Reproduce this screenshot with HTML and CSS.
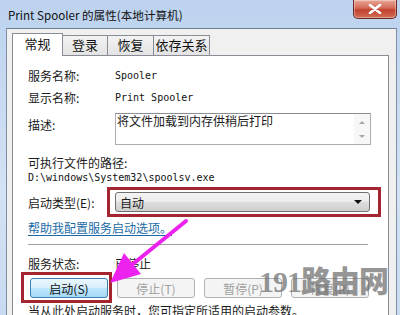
FILE: index.html
```html
<!DOCTYPE html>
<html lang="zh">
<head>
<meta charset="utf-8">
<link rel="stylesheet" href="styles.css">
</head>
<body>
<div class="window">
  <div class="titlebar">
    <span class="title">Print Spooler 的属性(本地计算机)</span>
    <span class="close">
      <svg width="14" height="10" viewBox="0 0 14 10"><path d="M2 1 L12 9 M12 1 L2 9" stroke="#fff" stroke-width="2.6" stroke-linecap="round"/></svg>
    </span>
  </div>
  <div class="client">
    <div class="tabs">
      <span class="tab active">常规</span>
      <span class="tab">登录</span>
      <span class="tab">恢复</span>
      <span class="tab">依存关系</span>
    </div>
    <div class="panel">
      <div class="row"><span class="label">服务名称:</span><span class="mono">Spooler</span></div>
      <div class="row"><span class="label">显示名称:</span><span class="mono">Print Spooler</span></div>
      <div class="row desc">
        <span class="label">描述:</span>
        <div class="textarea">
          <span class="tatext">将文件加载到内存供稍后打印</span>
          <span class="scroll"><i class="up"></i><i class="down"></i></span>
        </div>
      </div>
      <div class="plain pathlabel">可执行文件的路径:</div>
      <div class="mono path">D:\windows\System32\spoolsv.exe</div>
      <div class="row startrow">
        <span class="label">启动类型(E):</span>
        <div class="select hl-sel"><span>自动</span><i class="caret"></i></div>
      </div>
      <div class="link">帮助我配置服务启动选项。</div>
      <div class="sep"></div>
      <div class="row status"><span class="label">服务状态:</span><span>已停止</span></div>
      <div class="buttons">
        <span class="btn primary hl-btn">启动(S)</span>
        <span class="btn disabled">停止(T)</span>
        <span class="btn disabled">暂停(P)</span>
        <span class="btn disabled">恢复(R)</span>
      </div>
      <div class="plain note">当从此处启动服务时，您可指定所适用的启动参数。</div>
    </div>
  </div>
  <svg class="arrow" width="400" height="315" viewBox="0 0 400 315">
    <line x1="186" y1="221" x2="128" y2="268" stroke="#ee22ee" stroke-width="4" stroke-linecap="round"/>
    <polygon points="110,283 124,253 141,274" fill="#ee22ee"/>
  </svg>
  <div class="watermark"><span class="wm-num">191</span><span class="wm-cjk">路由网</span></div>
</div>
</body>
</html>
```
FILE: styles.css
```css
* { box-sizing: border-box; margin: 0; padding: 0; }
body {
  width: 400px;
  height: 315px;
  overflow: hidden;
  font-family: "Noto Sans CJK SC", "Noto Sans", sans-serif;
  font-size: 12px;
  color: #1a1a1a;
  background: #c8d9ef;
}
.window {
  position: relative;
  width: 400px;
  height: 315px;
  display: flex;
  flex-direction: column;
  background: linear-gradient(180deg, #bcd2ee 0%, #d3e2f4 60%, #c9dbf1 100%);
  overflow: hidden;
}
.titlebar {
  height: 28px;
  flex: none;
  display: flex;
  justify-content: space-between;
  align-items: flex-start;
  padding-left: 8px;
  padding-right: 3px;
}
.title {
  font-size: 11.6px;
  line-height: 14px;
  margin-top: 8px;
  color: #111;
}
.close {
  width: 44px;
  height: 19px;
  display: flex;
  align-items: center;
  justify-content: center;
  background: linear-gradient(180deg, #e9a898 0%, #d26a56 45%, #c2412b 55%, #d1705a 100%);
  border: 1px solid #6b2a24;
  border-top: none;
  border-radius: 0 0 5px 5px;
  box-shadow: inset 0 0 0 1px rgba(255,255,255,0.35);
}
.client {
  flex: 1;
  margin-left: 6px;
  margin-right: 3px;
  background: #f0f0f0;
  border-left: 1px solid #7f8fa3;
  border-top: 1px solid #6f7f95;
  border-right: 1px solid #7f8fa3;
  padding: 4px 7px 0 5px;
  display: flex;
  flex-direction: column;
}
.tabs {
  display: flex;
  align-items: flex-end;
  height: 22px;
  flex: none;
  position: relative;
  z-index: 2;
}
.tab {
  height: 20px;
  font-size: 13px;
  line-height: 18px;
  white-space: nowrap;
  text-align: center;
  border: 1px solid #898c95;
  border-left: none;
  border-bottom: none;
  background: linear-gradient(180deg, #f3f3f3, #e3e3e3);
  color: #111;
}
.tab:nth-child(2) { width: 45px; }
.tab:nth-child(3) { width: 46px; }
.tab:nth-child(4) { width: 56px; }
.tab.active {
  width: 51px;
  height: 23px;
  background: #fff;
  border-left: 1px solid #898c95;
  margin-bottom: -1px;
  line-height: 20px;
}
.panel {
  flex: 1;
  background: #fff;
  border: 1px solid #898c95;
  padding: 8px 16px 0 15px;
  display: flex;
  flex-direction: column;
}
.row {
  display: grid;
  grid-template-columns: 87px 1fr;
  align-items: center;
  height: 22px;
}
.label { color: #1a1a1a; }
.mono {
  font-family: "DejaVu Sans Mono", "Liberation Mono", monospace;
  font-size: 10px;
  color: #111;
}
.row.desc {
  height: 32px;
  margin-top: 5px;
  align-items: start;
}
.row.desc .label { padding-top: 3px; line-height: 18px; }
.textarea {
  height: 32px;
  border: 1px solid #abadb3;
  border-top-color: #8a8d94;
  display: flex;
  justify-content: space-between;
  margin-right: 1px;
}
.tatext { line-height: 14px; padding-left: 1px; }
.scroll {
  width: 16px;
  display: flex;
  flex-direction: column;
  justify-content: space-between;
  align-items: center;
  padding: 7px 0 6px;
  background: #f7f7f7;
}
.scroll i {
  width: 0; height: 0;
  border-left: 3px solid transparent;
  border-right: 3px solid transparent;
}
.scroll .up { border-bottom: 3px solid #a8a8a8; }
.scroll .down { border-top: 3px solid #a8a8a8; }
.plain { line-height: 18px; }
.pathlabel { margin-top: 9px; }
.path { line-height: 12px; }
.row.startrow { height: 20px; margin-top: 8px; }
.select {
  height: 20px;
  border: 1px solid #707070;
  border-radius: 3px;
  background: linear-gradient(180deg, #f4f4f4 0%, #ebebeb 48%, #dddddd 52%, #cfcfcf 100%);
  display: flex;
  justify-content: space-between;
  align-items: center;
  padding: 0 7px 0 4px;
  margin-right: 2px;
}
.caret {
  width: 0; height: 0;
  border-left: 4px solid transparent;
  border-right: 4px solid transparent;
  border-top: 4px solid #111;
}
.hl-sel, .hl-btn { position: relative; }
.hl-sel::after, .hl-btn::after {
  content: "";
  position: absolute;
  border: 3px solid #a42530;
  pointer-events: none;
}
.hl-sel::after { top: -6px; left: -9px; right: -12px; bottom: -6px; }
.hl-btn::after { top: -7px; left: -10px; right: -5px; bottom: -6px; }
.link {
  line-height: 18px;
  margin-top: 7px;
  color: #1b6aa5;
  text-decoration: underline;
  text-underline-offset: 2px;
}
.sep {
  height: 2px;
  margin-top: 7px;
  border-top: 1px solid #a0a0a0;
  border-bottom: 1px solid #fff;
  margin-right: 4px;
}
.row.status { height: 18px; margin-top: 8px; }
.buttons {
  display: flex;
  gap: 9px;
  margin-top: 6px;
  margin-left: 2px;
}
.btn {
  width: 78px;
  height: 20px;
  display: flex;
  align-items: center;
  justify-content: center;
  border: 1px solid #adb2b5;
  border-radius: 3px;
  background: #f4f4f4;
  color: #a0a0a0;
}
.btn.primary {
  border-color: #3c7fb1;
  background: linear-gradient(180deg, #eaf6fd 0%, #d9f0fc 48%, #bee6fd 52%, #a7d9f5 100%);
  color: #111;
}
.note { margin-top: 4px; white-space: nowrap; }
.arrow {
  position: absolute;
  left: 0; top: 0;
  pointer-events: none;
}
.watermark {
  position: absolute;
  left: 259px;
  top: 262px;
  display: flex;
  align-items: baseline;
  color: rgba(110,110,110,0.72);
  font-weight: bold;
  pointer-events: none;
  line-height: 34px;
}
.wm-num {
  font-family: "Liberation Serif", serif;
  font-size: 30px;
  letter-spacing: -1px;
}
.wm-cjk {
  font-family: "Noto Sans CJK SC", sans-serif;
  font-size: 30px;
  font-weight: 900;
  letter-spacing: -1px;
}
```
